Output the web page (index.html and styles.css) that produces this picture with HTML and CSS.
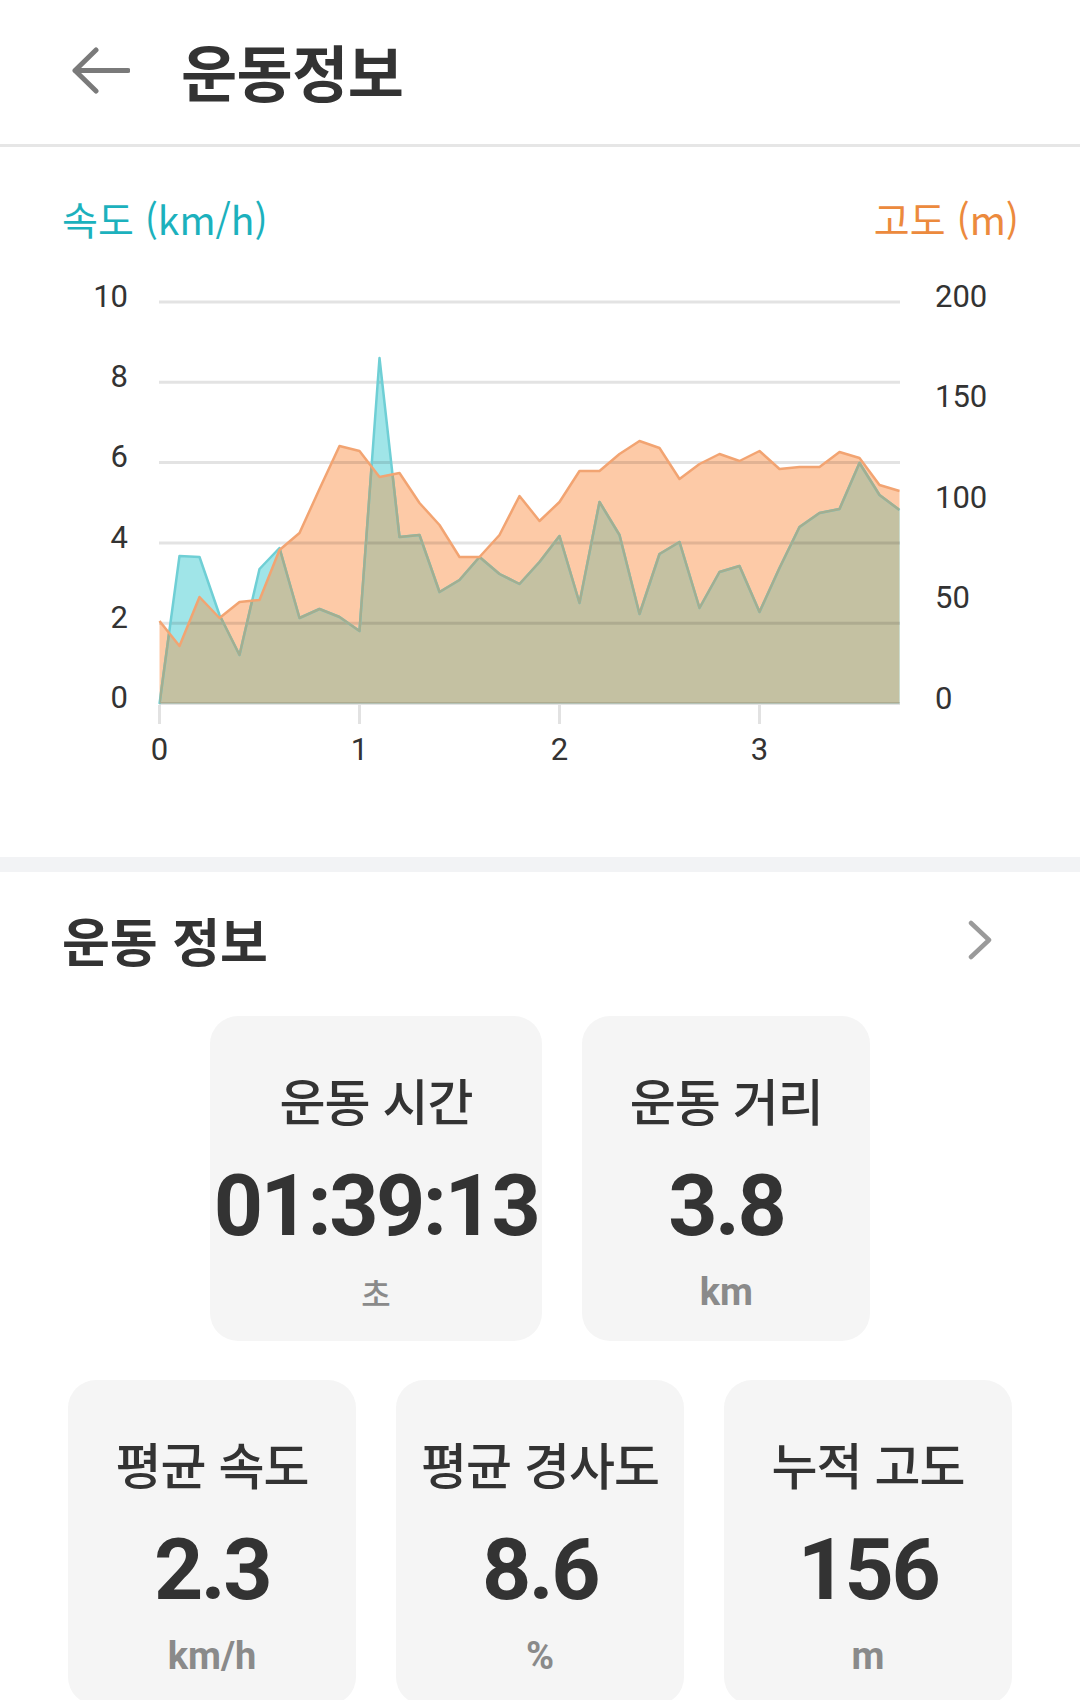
FILE: index.html
```html
<!DOCTYPE html>
<html lang="ko">
<head>
<meta charset="utf-8">
<title>운동정보</title>
<link rel="stylesheet" href="styles.css">
</head>
<body>
<header class="topbar">
  <svg class="back" width="58" height="47" viewBox="0 0 58 47">
    <path d="M24 3 L3 23.5 L24 44 M3 23.5 H56" fill="none" stroke="#7a7a7a" stroke-width="5" stroke-linecap="round" stroke-linejoin="round"/>
  </svg>
  <h1 class="title">운동정보</h1>
</header>

<section class="chart-section">
  <div class="legend">
    <span class="legend-speed">속도 (km/h)</span>
    <span class="legend-alt">고도 (m)</span>
  </div>
  <svg class="chart" viewBox="0 250 1080 560" width="1080" height="560">
    <defs>
      <clipPath id="clipAlt">
        <polygon points="159.5,703.5 159.5,621 179.5,646 199.5,597 219.5,618 239.5,602 259.5,600 279.5,550 299.5,533 319.5,489 339.5,446 359.5,451 379.5,477 399.5,473 419.5,503 439.5,525 459.5,557 479.5,557 499.5,535 519.5,496 539.5,521 559.5,502 579.5,471 599.5,471 619.5,454 639.5,441 659.5,448 679.5,479 699.5,464 719.5,454 739.5,461 759.5,451 779.5,469 799.5,467 819.5,467 839.5,452 859.5,458 879.5,485 899.5,491 899.5,703.5"/>
      </clipPath>
    </defs>
    <!-- altitude area -->
    <polygon fill="#fdcaa7" points="159.5,703.5 159.5,621 179.5,646 199.5,597 219.5,618 239.5,602 259.5,600 279.5,550 299.5,533 319.5,489 339.5,446 359.5,451 379.5,477 399.5,473 419.5,503 439.5,525 459.5,557 479.5,557 499.5,535 519.5,496 539.5,521 559.5,502 579.5,471 599.5,471 619.5,454 639.5,441 659.5,448 679.5,479 699.5,464 719.5,454 739.5,461 759.5,451 779.5,469 799.5,467 819.5,467 839.5,452 859.5,458 879.5,485 899.5,491 899.5,703.5"/>
    <!-- speed area -->
    <polygon fill="#a0e5e8" points="159.5,703.5 159.5,704 179.5,556 199.5,557 219.5,615 239.5,655 259.5,569 279.5,548 299.5,618 319.5,609 339.5,617 359.5,631 379.5,358 399.5,537 419.5,535 439.5,592 459.5,580 479.5,557 499.5,574 519.5,584 539.5,562 559.5,536 579.5,603 599.5,502 619.5,535 639.5,614 659.5,554 679.5,542 699.5,608 719.5,572 739.5,566 759.5,612 779.5,568 799.5,527 819.5,513 839.5,509 859.5,463 879.5,495 899.5,510 899.5,703.5"/>
    <!-- overlap -->
    <polygon fill="#c4c1a2" clip-path="url(#clipAlt)" points="159.5,703.5 159.5,704 179.5,556 199.5,557 219.5,615 239.5,655 259.5,569 279.5,548 299.5,618 319.5,609 339.5,617 359.5,631 379.5,358 399.5,537 419.5,535 439.5,592 459.5,580 479.5,557 499.5,574 519.5,584 539.5,562 559.5,536 579.5,603 599.5,502 619.5,535 639.5,614 659.5,554 679.5,542 699.5,608 719.5,572 739.5,566 759.5,612 779.5,568 799.5,527 819.5,513 839.5,509 859.5,463 879.5,495 899.5,510 899.5,703.5"/>

    <!-- grid -->
    <g stroke="rgba(0,0,0,0.11)" stroke-width="3">
      <line x1="159" y1="302" x2="900" y2="302"/>
      <line x1="159" y1="382.3" x2="900" y2="382.3"/>
      <line x1="159" y1="462.6" x2="900" y2="462.6"/>
      <line x1="159" y1="542.9" x2="900" y2="542.9"/>
      <line x1="159" y1="623.2" x2="900" y2="623.2"/>
      <line x1="159" y1="703.5" x2="900" y2="703.5"/>
    </g>
    <g stroke="#e2e2e2" stroke-width="3">
      <line x1="159.5" y1="705" x2="159.5" y2="724"/>
      <line x1="359.5" y1="705" x2="359.5" y2="724"/>
      <line x1="559.5" y1="705" x2="559.5" y2="724"/>
      <line x1="759.5" y1="705" x2="759.5" y2="724"/>
    </g>

    <!-- speed line -->
    <polyline fill="none" stroke="#6fcfd5" stroke-width="2.5" stroke-linejoin="round" points="159.5,704 179.5,556 199.5,557 219.5,615 239.5,655 259.5,569 279.5,548 299.5,618 319.5,609 339.5,617 359.5,631 379.5,358 399.5,537 419.5,535 439.5,592 459.5,580 479.5,557 499.5,574 519.5,584 539.5,562 559.5,536 579.5,603 599.5,502 619.5,535 639.5,614 659.5,554 679.5,542 699.5,608 719.5,572 739.5,566 759.5,612 779.5,568 799.5,527 819.5,513 839.5,509 859.5,463 879.5,495 899.5,510"/>
    <polyline fill="none" stroke="#a3ae90" stroke-width="2.5" stroke-linejoin="round" clip-path="url(#clipAlt)" points="159.5,704 179.5,556 199.5,557 219.5,615 239.5,655 259.5,569 279.5,548 299.5,618 319.5,609 339.5,617 359.5,631 379.5,358 399.5,537 419.5,535 439.5,592 459.5,580 479.5,557 499.5,574 519.5,584 539.5,562 559.5,536 579.5,603 599.5,502 619.5,535 639.5,614 659.5,554 679.5,542 699.5,608 719.5,572 739.5,566 759.5,612 779.5,568 799.5,527 819.5,513 839.5,509 859.5,463 879.5,495 899.5,510"/>

    <!-- altitude line -->
    <polyline fill="none" stroke="#f2a472" stroke-width="2.5" stroke-linejoin="round" points="159.5,621 179.5,646 199.5,597 219.5,618 239.5,602 259.5,600 279.5,550 299.5,533 319.5,489 339.5,446 359.5,451 379.5,477 399.5,473 419.5,503 439.5,525 459.5,557 479.5,557 499.5,535 519.5,496 539.5,521 559.5,502 579.5,471 599.5,471 619.5,454 639.5,441 659.5,448 679.5,479 699.5,464 719.5,454 739.5,461 759.5,451 779.5,469 799.5,467 819.5,467 839.5,452 859.5,458 879.5,485 899.5,491"/>

    <!-- axis labels -->
    <g class="axis" font-family="Roboto, sans-serif" font-size="31" fill="#333">
      <text x="128" y="306.5" text-anchor="end">10</text>
      <text x="128" y="387" text-anchor="end">8</text>
      <text x="128" y="467" text-anchor="end">6</text>
      <text x="128" y="547.5" text-anchor="end">4</text>
      <text x="128" y="628" text-anchor="end">2</text>
      <text x="128" y="708" text-anchor="end">0</text>

      <text x="935" y="306.5">200</text>
      <text x="935" y="407">150</text>
      <text x="935" y="507.5">100</text>
      <text x="935" y="608">50</text>
      <text x="935" y="708.5">0</text>

      <text x="159.5" y="760" text-anchor="middle">0</text>
      <text x="359.5" y="760" text-anchor="middle">1</text>
      <text x="559.5" y="760" text-anchor="middle">2</text>
      <text x="759.5" y="760" text-anchor="middle">3</text>
    </g>
  </svg>
</section>

<div class="band"></div>

<section class="stats">
  <div class="stats-head">
    <h2 class="stats-title">운동 정보</h2>
    <svg class="chevron" width="26" height="40" viewBox="0 0 26 40">
      <path d="M5 3 L23 20 L5 37" fill="none" stroke="#9a9a9a" stroke-width="4.5" stroke-linecap="round" stroke-linejoin="round"/>
    </svg>
  </div>

  <div class="row row-first">
    <div class="card">
      <div class="card-label">운동 시간</div>
      <div class="card-value">01:39:13</div>
      <div class="card-unit unit-ko">초</div>
    </div>
    <div class="card">
      <div class="card-label">운동 거리</div>
      <div class="card-value">3.8</div>
      <div class="card-unit">km</div>
    </div>
  </div>

  <div class="row row-second">
    <div class="card">
      <div class="card-label">평균 속도</div>
      <div class="card-value">2.3</div>
      <div class="card-unit">km/h</div>
    </div>
    <div class="card">
      <div class="card-label">평균 경사도</div>
      <div class="card-value">8.6</div>
      <div class="card-unit">%</div>
    </div>
    <div class="card">
      <div class="card-label">누적 고도</div>
      <div class="card-value">156</div>
      <div class="card-unit">m</div>
    </div>
  </div>
</section>
</body>
</html>
```

FILE: styles.css
```css
html, body {
  margin: 0;
  padding: 0;
  background: #ffffff;
}

body {
  width: 1080px;
  font-family: "Noto Sans CJK KR", "Noto Sans", Roboto, sans-serif;
  color: #333333;
}

/* ---------- top bar ---------- */
.topbar {
  display: flex;
  align-items: center;
  height: 140px;
  padding: 0 0 4px 72px;
  border-bottom: 3px solid #e6e6e6;
}

.back {
  display: block;
  flex: none;
}

.title {
  margin: 0 0 0 51px;
  font-size: 61px;
  font-weight: 700;
  letter-spacing: -0.5px;
  line-height: 1;
  color: #333333;
}

/* ---------- chart ---------- */
.chart-section {
  padding: 47px 0 47px;
}

.legend {
  display: flex;
  justify-content: space-between;
  height: 48px;
  padding: 0 61px 0 62px;
  margin-bottom: 8px;
  font-size: 39px;
  line-height: 48px;
}

.legend-speed {
  color: #1cb1bd;
}

.legend-alt {
  color: #ec8a3d;
}

.chart {
  display: block;
  width: 1080px;
  height: 560px;
}

.band {
  height: 15px;
  background: #f2f3f5;
}

/* ---------- stats ---------- */
.stats-head {
  display: flex;
  justify-content: space-between;
  align-items: center;
  height: 60px;
  padding: 38px 88px 0 62px;
}

.stats-title {
  margin: 0;
  font-size: 52px;
  font-weight: 700;
  line-height: 60px;
  color: #333333;
}

.chevron {
  display: block;
}

.row {
  display: flex;
  justify-content: center;
  gap: 40px;
}

.row-first {
  margin-top: 46px;
}

.row-second {
  margin-top: 39px;
}

.card {
  box-sizing: border-box;
  min-width: 288px;
  height: 325px;
  padding: 54px 4px 0;
  background: #f5f5f5;
  border-radius: 28px;
  display: flex;
  flex-direction: column;
  align-items: center;
}

.card-label {
  font-size: 50px;
  font-weight: 500;
  letter-spacing: -1px;
  line-height: 58px;
  color: #333333;
  white-space: nowrap;
}

.card-value {
  margin-top: 28px;
  font-family: Roboto, "Noto Sans", sans-serif;
  font-weight: 700;
  font-size: 86px;
  line-height: 100px;
  letter-spacing: -2.5px;
  color: #333333;
  white-space: nowrap;
}

.card-unit {
  margin-top: 16px;
  font-family: Roboto, "Noto Sans CJK KR", sans-serif;
  font-weight: 700;
  font-size: 38px;
  line-height: 40px;
  color: #8a8a8a;
}

.unit-ko {
  font-family: "Noto Sans CJK KR", sans-serif;
  font-weight: 500;
  font-size: 32px;
}
```
